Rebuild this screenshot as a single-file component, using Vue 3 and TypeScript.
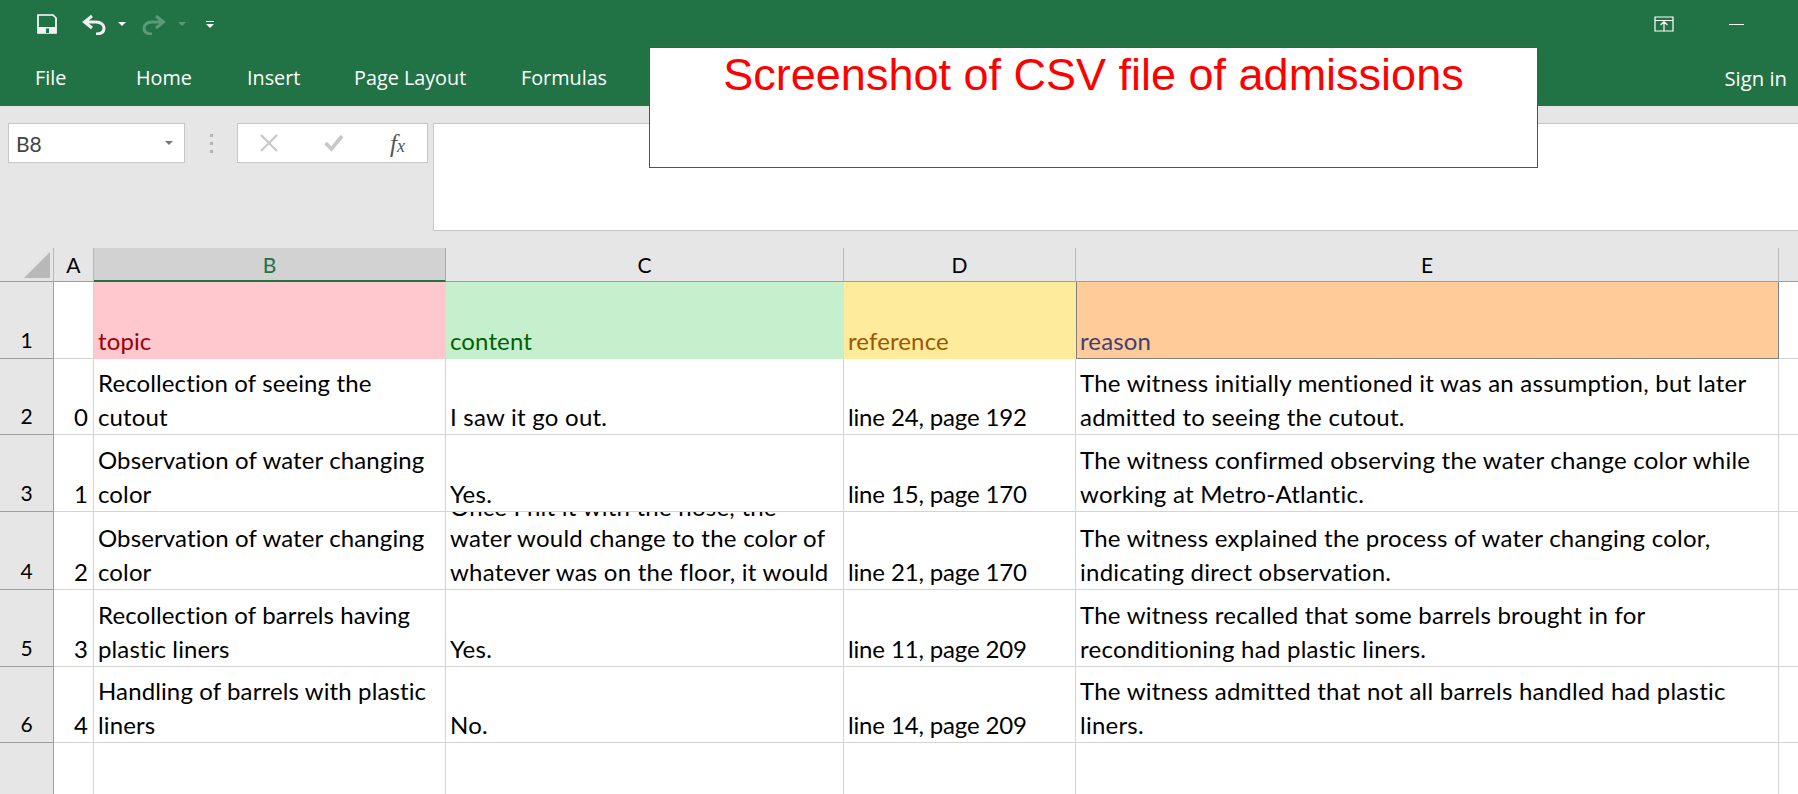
<template>
  <div class="window">
    <header class="ribbon">
      <div class="qat">
        <svg class="ic-save" width="20" height="20" viewBox="0 0 20 20">
          <path d="M1 1h15l3 3v15H1z" fill="none" stroke="#fff" stroke-width="1.7" />
          <rect x="1" y="13" width="18" height="6" fill="#f2f2f2" />
          <rect x="9" y="14.5" width="3" height="4.5" fill="#217346" />
        </svg>
        <svg class="ic-undo" width="24" height="21" viewBox="0 0 24 21">
          <path d="M10 2L2.500 8L10 14M3 8H14C19 8 22 11 22 14C22 18 19 20 14 20" fill="none" stroke="#f0f0f0" stroke-width="3" />
        </svg>
        <span class="caret"></span>
        <svg class="ic-redo" width="24" height="21" viewBox="0 0 24 21">
          <path d="M14 2L21.500 8L14 14M21 8H10C5 8 2 11 2 14C2 18 5 20 10 20" fill="none" stroke="#5b9a78" stroke-width="3" />
        </svg>
        <span class="caret dim"></span>
        <span class="customize"><i></i><span class="caret"></span></span>
        <span class="spacer"></span>
        <svg class="ic-restore" width="20" height="16" viewBox="0 0 20 16">
          <path d="M1 1H19V15H1zM1 4.500H19M10 15V6M6.500 9L10 5.500L13.500 9" fill="none" stroke="#fff" stroke-width="1.200" />
        </svg>
        <span class="minimize"></span>
      </div>
      <nav class="tabs">
        <span v-for="tab in tabs" :key="tab.name" class="tab" :style="{ width: tab.width + 'px' }">{{ tab.name }}</span>
        <span class="spacer"></span>
        <span class="sign-in">Sign in</span>
      </nav>
    </header>

    <section class="formula-bar">
      <div class="name-box">
        <span>B8</span>
        <span class="caret grey"></span>
      </div>
      <div class="grip"><i></i><i></i><i></i></div>
      <div class="fx-box">
        <svg width="18" height="18" viewBox="0 0 18 18">
          <path d="M1 1L17 17M17 1L1 17" stroke="#c8c8c8" stroke-width="2.200" fill="none" />
        </svg>
        <svg width="20" height="18" viewBox="0 0 20 18">
          <path d="M1.500 9L7.500 15L18 2" stroke="#c8c8c8" stroke-width="3.600" fill="none" />
        </svg>
        <span class="fx">f<small>x</small></span>
      </div>
      <div class="formula-input"></div>
    </section>

    <section class="sheet">
      <div class="col-head corner">
        <svg width="26" height="26" viewBox="0 0 26 26"><path d="M26 0V26H0z" fill="#b8b8b8" /></svg>
      </div>
      <div
        v-for="col in columns"
        :key="col"
        class="col-head"
        :class="{ selected: col === 'B' }"
      >{{ col }}</div>
      <div class="col-head tail"></div>

      <div class="row-head">1</div>
      <div class="cell"></div>
      <div class="cell title bad">topic</div>
      <div class="cell title good">content</div>
      <div class="cell title neutral">reference</div>
      <div class="cell title input">reason</div>
      <div class="cell tail"></div>

      <template v-for="(row, i) in rows" :key="i">
        <div class="row-head">{{ i + 2 }}</div>
        <div class="cell num">{{ i }}</div>
        <div class="cell"><span v-for="line in row.topic" :key="line">{{ line }}</span></div>
        <div class="cell wide" :class="{ clipped: row.content.length > 2 }"><span v-for="line in row.content" :key="line">{{ line }}</span></div>
        <div class="cell tight"><span>{{ row.reference }}</span></div>
        <div class="cell wide"><span v-for="line in row.reason" :key="line">{{ line }}</span></div>
        <div class="cell tail"></div>
      </template>

      <div class="row-head last"></div>
      <div v-for="n in 5" :key="n" class="cell last"></div>
      <div class="cell tail last"></div>
    </section>

    <div class="note">Screenshot of CSV file of admissions</div>
  </div>
</template>

<script setup lang="ts">
interface Row {
  topic: string[]
  content: string[]
  reference: string
  reason: string[]
}

const tabs = [
  { name: 'File', width: 101 },
  { name: 'Home', width: 111 },
  { name: 'Insert', width: 107 },
  { name: 'Page Layout', width: 167 },
  { name: 'Formulas', width: 100 },
]

const columns = ['A', 'B', 'C', 'D', 'E']

const rows: Row[] = [
  {
    topic: ['Recollection of seeing the', 'cutout'],
    content: ['I saw it go out.'],
    reference: 'line 24, page 192',
    reason: ['The witness initially mentioned it was an assumption, but later', 'admitted to seeing the cutout.'],
  },
  {
    topic: ['Observation of water changing', 'color'],
    content: ['Yes.'],
    reference: 'line 15, page 170',
    reason: ['The witness confirmed observing the water change color while', 'working at Metro-Atlantic.'],
  },
  {
    topic: ['Observation of water changing', 'color'],
    content: ['Once I hit it with the hose, the', 'water would change to the color of', 'whatever was on the floor, it would'],
    reference: 'line 21, page 170',
    reason: ['The witness explained the process of water changing color,', 'indicating direct observation.'],
  },
  {
    topic: ['Recollection of barrels having', 'plastic liners'],
    content: ['Yes.'],
    reference: 'line 11, page 209',
    reason: ['The witness recalled that some barrels brought in for', 'reconditioning had plastic liners.'],
  },
  {
    topic: ['Handling of barrels with plastic', 'liners'],
    content: ['No.'],
    reference: 'line 14, page 209',
    reason: ['The witness admitted that not all barrels handled had plastic', 'liners.'],
  },
]
</script>

<style>
html,
body {
  margin: 0;
  overflow: hidden;
  background: #fff;
}
</style>

<style scoped>
.window {
  position: relative;
  width: 1798px;
  height: 794px;
  overflow: hidden;
  display: flex;
  flex-direction: column;
  font-family: "Open Sans", "Noto Sans", sans-serif;
  color: #000;
}

.spacer {
  flex: 1;
}

/* ribbon */
.ribbon {
  height: 106px;
  flex: none;
  background: #217346;
  color: #fff;
}

.qat {
  height: 48px;
  display: flex;
  align-items: center;
  padding: 0 54px 0 37px;
  box-sizing: border-box;
}

.ic-save {
  margin-right: 25px;
}

.ic-undo {
  margin-right: 12px;
}

.ic-redo {
  margin: 0 12px 0 16px;
}

.caret {
  display: inline-block;
  width: 0;
  height: 0;
  border-left: 4px solid transparent;
  border-right: 4px solid transparent;
  border-top: 4px solid #fff;
}

.caret.dim {
  border-top-color: #5b9a78;
}

.caret.grey {
  border-top-color: #777;
}

.customize {
  margin-left: 20px;
  display: flex;
  flex-direction: column;
  align-items: center;
  gap: 2px;
}

.customize i {
  width: 8px;
  height: 1px;
  background: #fff;
}

.ic-restore {
  margin-right: 55px;
}

.minimize {
  width: 15px;
  height: 1px;
  background: #fff;
}

.tabs {
  height: 58px;
  display: flex;
  align-items: flex-start;
  padding: 15px 11px 0 35px;
  box-sizing: border-box;
  font-size: 19.800px;
  line-height: 30px;
}

.tab {
  flex: none;
}

.sign-in {
  font-size: 20.300px;
}

/* formula bar */
.formula-bar {
  height: 142px;
  flex: none;
  background: #e6e6e6;
  box-sizing: border-box;
  padding: 17px 0 17px 8px;
  display: flex;
  align-items: flex-start;
}

.name-box {
  width: 177px;
  height: 40px;
  box-sizing: border-box;
  background: #fff;
  border: 1px solid #c6c6c6;
  display: flex;
  align-items: center;
  justify-content: space-between;
  padding: 0 11px 0 7px;
  font-family: "Lato", sans-serif;
  font-size: 21px;
  color: #444;
}

.grip {
  width: 52px;
  height: 40px;
  display: flex;
  flex-direction: column;
  align-items: center;
  justify-content: center;
  gap: 5px;
}

.grip i {
  width: 3px;
  height: 3px;
  background: #b4b4b4;
}

.fx-box {
  width: 191px;
  height: 40px;
  box-sizing: border-box;
  background: #fff;
  border: 1px solid #c6c6c6;
  display: flex;
  align-items: center;
  justify-content: space-between;
  padding: 0 22px;
}

.fx {
  font-family: "Liberation Serif", serif;
  font-style: italic;
  font-size: 25px;
  line-height: 1;
  color: #555;
}

.fx small {
  font-size: 18px;
}

.formula-input {
  flex: 1;
  height: 108px;
  margin-left: 5px;
  box-sizing: border-box;
  background: #fff;
  border: 1px solid #c6c6c6;
  border-right: 0;
}

/* sheet */
.sheet {
  flex: 1;
  display: grid;
  grid-template-columns: 54px 40px 352px 398px 232px 703px 1fr;
  grid-template-rows: 34px 77px 76px 77px 78px 77px 76px 1fr;
  font-family: "Lato", sans-serif;
  font-size: 24px;
  letter-spacing: 0.12px;
  line-height: 34px;
}

.col-head {
  background: #e6e6e6;
  border-right: 1px solid #b8b8b8;
  border-bottom: 1px solid #9e9e9e;
  box-sizing: border-box;
  text-align: center;
  font-size: 21px;
}

.col-head.corner {
  display: flex;
  align-items: flex-end;
  justify-content: flex-end;
  padding: 0 3px 3px 0;
}

.col-head.selected {
  background: #d2d2d2;
  color: #217346;
  border-right-color: #aaa;
  border-bottom: 2px solid #217346;
}

.col-head.tail {
  border-right: 0;
}

.row-head {
  background: #e6e6e6;
  border-right: 1px solid #9e9e9e;
  border-bottom: 1px solid #9e9e9e;
  box-sizing: border-box;
  display: flex;
  align-items: flex-end;
  justify-content: center;
  padding-bottom: 1px;
  font-size: 21px;
  letter-spacing: 0;
}

.cell {
  min-width: 0;
  overflow: hidden;
  box-sizing: border-box;
  border-right: 1px solid #d4d4d4;
  border-bottom: 1px solid #d4d4d4;
  display: flex;
  flex-direction: column;
  justify-content: flex-end;
  padding: 0 0 0 4px;
  white-space: nowrap;
}

.cell.num {
  align-items: flex-end;
  padding: 0 5px 0 0;
}

.cell.tail {
  border-right: 0;
}

/* Lato runs a bit off Calibri's widths, evened out per column */
.cell.wide {
  letter-spacing: 0.24px;
}

.cell.tight {
  letter-spacing: -0.15px;
}

/* the overflowing line only shows its bottom edge, as in Excel */
.cell.clipped span:first-child {
  flex: none;
  line-height: 28px;
}

.title {
  border-right-color: transparent;
  border-bottom-color: transparent;
}

.bad {
  background: #ffc7ce;
  color: #9c0006;
}

.good {
  background: #c6efce;
  color: #006100;
}

.neutral {
  background: #ffeb9c;
  color: #9c5700;
}

.input {
  background: #ffcc99;
  color: #3f3f76;
  border-left: 1px solid #7f7f7f;
  border-right: 1px solid #7f7f7f;
  border-bottom: 1px solid #7f7f7f;
  padding-left: 3px;
}

.last {
  border-bottom: 0;
}

/* red annotation pasted over the window */
.note {
  position: absolute;
  left: 649px;
  top: 47px;
  width: 889px;
  height: 121px;
  box-sizing: border-box;
  background: #fff;
  border: 1px solid #e81010;
  text-align: center;
  font-family: "Liberation Sans", Arial, sans-serif;
  font-size: 45px;
  line-height: 54px;
  color: #ff0000;
}
</style>
